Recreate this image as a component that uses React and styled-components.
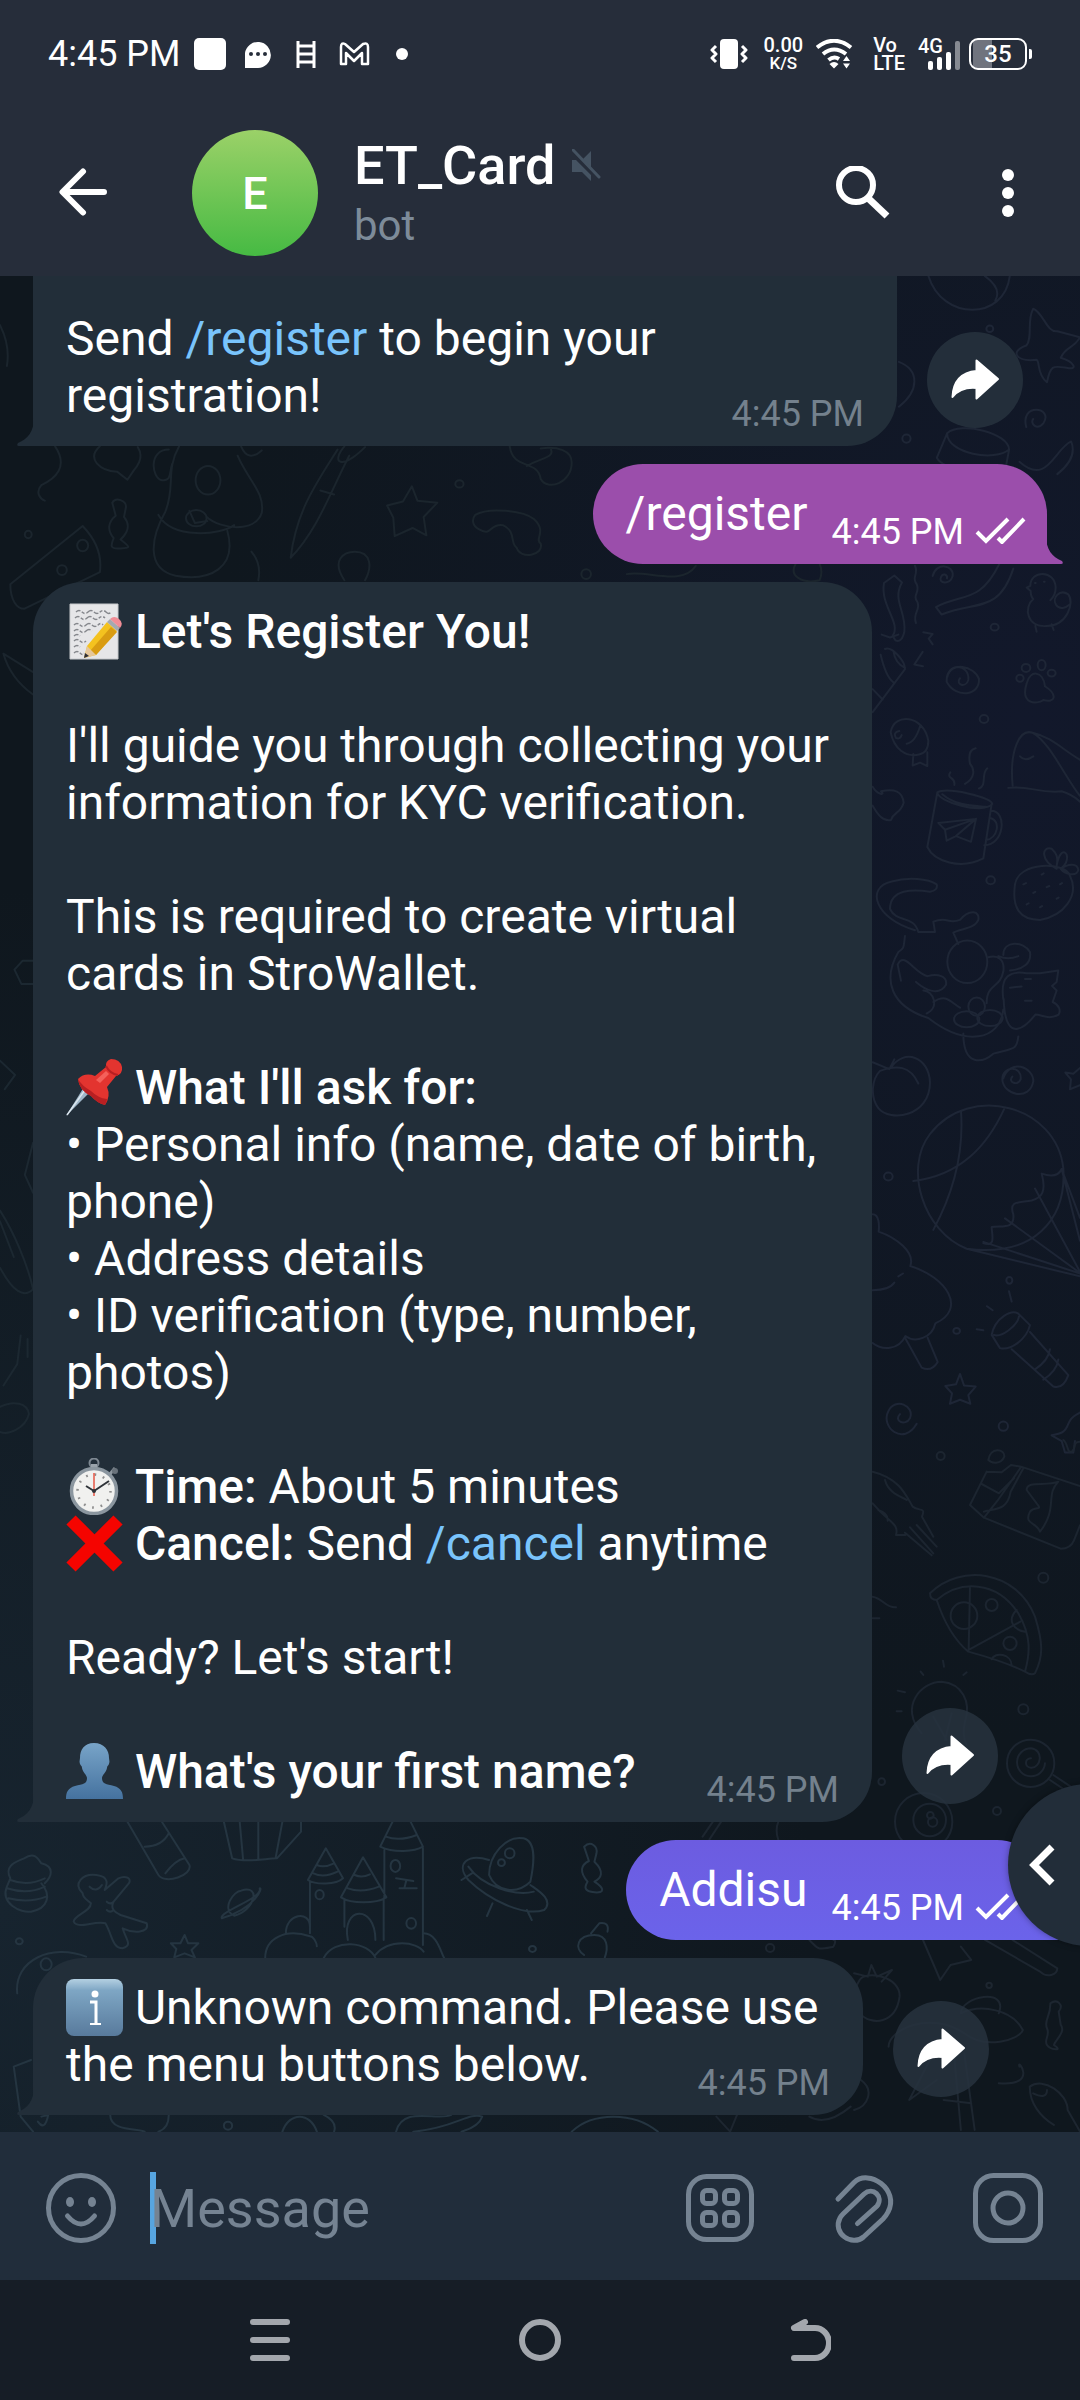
import React from "react";
import styled, { createGlobalStyle, css } from "styled-components";

const Global = createGlobalStyle`
  *, *::before, *::after { box-sizing: border-box; }
  body { margin: 0; background: #161d26; }
  button { border: 0; padding: 0; background: none; color: inherit; font: inherit; cursor: pointer; }
  svg { display: block; flex: none; }
  p { margin: 0; }
`;

const Screen = styled.div`
  min-height: 100vh;
  display: flex;
  flex-direction: column;
  overflow: hidden;
  font-family: Roboto, "Noto Sans", sans-serif;
  color: #fff;
`;

/* ---------- top ---------- */

const Top = styled.header`
  background: #262d3a;
`;

const StatusBar = styled.div`
  height: 108px;
  padding: 0 48px;
  display: flex;
  align-items: center;
  justify-content: space-between;
`;

const StatusGroup = styled.div`
  display: flex;
  align-items: center;
  gap: ${(p) => p.$gap}px;
`;

const Clock = styled.span`
  font-size: 36px;
  line-height: 42px;
`;

const Stack = styled.span`
  display: flex;
  flex-direction: column;
  align-items: ${(p) => p.$align || "center"};
  font-size: 20px;
  font-weight: 500;
  line-height: 18px;
`;

const StackSmall = styled.span`
  font-size: 17px;
`;

const Signal = styled.span`
  display: grid;
  width: 42px;
  height: 34px;
  font-size: 20px;
  font-weight: 500;
  line-height: 18px;
  > * { grid-area: 1 / 1; }
`;

const BatteryWrap = styled.span`
  display: flex;
  align-items: center;
`;

const Battery = styled.span`
  width: 58px;
  height: 32px;
  border: 2px solid #fff;
  border-radius: 9px;
  font-size: 24px;
  font-weight: 500;
  line-height: 28px;
  text-align: center;
  background: linear-gradient(to right, transparent 2px, #70747e 2px, #70747e 21px, transparent 21px);
`;

const BatteryTip = styled.span`
  width: 3px;
  height: 10px;
  margin-left: 2px;
  border-radius: 0 2px 2px 0;
  background: #fff;
`;

const ChatHeader = styled.div`
  height: 168px;
  padding: 2px 66px 0 58px;
  display: flex;
  align-items: center;
`;

const Avatar = styled.div`
  width: 126px;
  height: 126px;
  margin: 0 36px 0 84px;
  border-radius: 50%;
  flex: none;
  display: grid;
  place-items: center;
  background: linear-gradient(#9bd168, #46ba43);
  font-size: 45px;
  font-weight: 500;
`;

const Titles = styled.div`
  flex: 1;
  min-width: 0;
  display: flex;
  flex-direction: column;
  gap: 5px;
`;

const TitleRow = styled.div`
  display: flex;
  align-items: center;
  gap: 16px;
`;

const Title = styled.h1`
  margin: 0;
  font-size: 54px;
  font-weight: 500;
  line-height: 60px;
`;

const Subtitle = styled.span`
  font-size: 42px;
  line-height: 50px;
  color: #7d8b99;
`;

const HeaderActions = styled.div`
  display: flex;
  align-items: center;
  gap: 112px;
`;

/* ---------- conversation ---------- */

const Chat = styled.main`
  flex: 1;
  position: relative;
  overflow: hidden;
  padding-bottom: 17px;
  display: flex;
  flex-direction: column;
  gap: 18px;
  background:
    radial-gradient(ellipse 75% 55% at 95% 24%, #12182b, transparent),
    radial-gradient(ellipse 75% 55% at 0% 88%, #17242f, transparent),
    #0f171e;
`;

const Wallpaper = styled.svg`
  position: absolute;
  inset: 0;
  width: 100%;
  height: 100%;
  fill: none;
  stroke: #1e2636;
  stroke-width: 2;
  stroke-linecap: round;
  stroke-linejoin: round;
  path, circle, ellipse { vector-effect: non-scaling-stroke; }
`;

const Row = styled.div`
  position: relative;
  display: flex;
  align-items: flex-end;
  gap: 30px;
  padding: 0 33px;
  justify-content: ${(p) => (p.$out ? "flex-end" : "flex-start")};
`;

const tailIn = css`
  border-radius: 50px 50px 50px 0;
  background: #222e39;
`;

const tailOut = css`
  border-radius: 50px 50px 0 50px;
  background: ${(p) => p.$tone};
`;

const Bubble = styled.article`
  position: relative;
  width: ${(p) => (p.$width ? p.$width + "px" : "auto")};
  padding: 21px 33px 22px;
  display: grid;
  font-size: 48px;
  line-height: 57px;
  ${(p) => (p.$out ? tailOut : tailIn)}
  ${(p) => p.$out && css`
    padding-right: 21px;
    grid-auto-flow: column;
    gap: 24px;
  `}
  ${(p) => p.$cut && css`
    padding-top: 34px;
    border-top-left-radius: 0;
    border-top-right-radius: 0;
  `}
`;

const Tail = styled.svg`
  position: absolute;
  bottom: 0;
  ${(p) => (p.$out ? "right: -16px; transform: scaleX(-1);" : "left: -16px;")}
`;

const Body = styled.div`
  grid-row: 1;
  grid-column: 1;
  min-width: 0;
`;

const Line = styled.p`
  min-height: 57px;
  font-weight: ${(p) => (p.$strong ? 500 : 400)};
  b { font-weight: 500; }
`;

const Command = styled.a`
  color: #79c4fc;
  text-decoration: none;
`;

const Stamp = styled.time`
  grid-row: 1;
  grid-column: ${(p) => (p.$out ? 2 : 1)};
  align-self: end;
  justify-self: end;
  margin-bottom: -11px;
  display: flex;
  align-items: baseline;
  gap: 11px;
  font-size: 36px;
  line-height: 42px;
  color: ${(p) => (p.$out ? "#fff" : "#74818d")};
`;

const Emoji = styled.svg`
  display: inline-block;
  vertical-align: top;
  width: 57px;
  height: 57px;
`;

const Forward = styled.button`
  width: 96px;
  height: 96px;
  margin-bottom: 18px;
  border-radius: 50%;
  flex: none;
  background: rgba(39, 50, 62, 0.85);
`;

const SideTab = styled.button`
  position: absolute;
  right: -90px;
  bottom: 186px;
  width: 162px;
  height: 162px;
  padding-left: 21px;
  border-radius: 50%;
  background: #222d39;
  box-shadow: 0 0 6px rgba(0, 0, 0, 0.35);
`;

/* ---------- bottom ---------- */

const Composer = styled.form`
  background: #212d3b;
  color: #758392;
  padding: 40px 36px 36px 45px;
  display: flex;
  align-items: center;
  gap: 72px;
`;

const Field = styled.div`
  flex: 1;
  min-width: 0;
  display: flex;
  align-items: center;
  margin-left: -39px;
`;

const Caret = styled.span`
  width: 6px;
  height: 72px;
  margin-right: -6px;
  background: #57a5e0;
`;

const Input = styled.input`
  flex: 1;
  min-width: 0;
  height: 72px;
  padding: 0;
  border: 0;
  outline: 0;
  background: transparent;
  color: #fff;
  font-family: inherit;
  font-size: 54px;
  &::placeholder { color: #758392; opacity: 1; }
`;

const NavBar = styled.nav`
  height: 120px;
  padding: 0 135px;
  background: #161d26;
  display: grid;
  grid-template-columns: repeat(3, 1fr);
  place-items: center;
`;

/* ---------- drawings ---------- */

const MemoEmoji = () => (
  <Emoji viewBox="0 0 57 57" role="img" aria-label="memo">
    <path d="M4 1h48v55H4z" fill="#e6e6e8" stroke="#c7c9cc" />
    <g stroke="#85878c" strokeWidth="1.4" fill="none" strokeDasharray="5 1.5 3 2 7 1.5">
      <path d="M10 9q3-3 6 0t6 0 6 0 6 0 6 0 5 0M9 15q3-3 6 0t6 0 6 0 6 0 6 0M8 22q3-3 6 0t6 0 6 0 6 0 5 0M8 28q3-3 6 0t6 0 6 0M8 33q3-3 6 0M8 38q3-3 6 0t6 0M8 44q3-3 6 0M8 50q3-3 6 0t4 0" />
    </g>
    <path d="M18 55l3-12 20-24 10 9-21 24z" fill="#f4c21f" />
    <path d="M24 48l21-24 6 5-21 23z" fill="#d99c12" />
    <path d="M18 55l3-12 9 9z" fill="#e6c79a" />
    <path d="M18 55l1-5 4 3z" fill="#2e2e33" />
    <path d="M41 19l3-3 10 9-3 3z" fill="#a4a9af" />
    <path d="M44 16q4-4 9 0t1 9z" fill="#f08d96" />
  </Emoji>
);

const PinEmoji = () => (
  <Emoji viewBox="0 0 57 57" role="img" aria-label="pushpin">
    <path d="M0 57L18 28l6 5z" fill="#9fb6c8" />
    <path d="M1 56L19 31" stroke="#dbe6ee" strokeWidth="1.5" />
    <path d="M12 20q7-7 17-3l11-9q-1-6 5-8 9 0 11 8 1 7-6 9l-9 11q4 9-2 18-8-2-14-9-12-6-13-17z" fill="#e3342f" />
    <path d="M12 20q1 11 13 17 6 7 14 9 2-3 2-6-9-1-16-8-9-5-13-12z" fill="#b81f22" />
    <path d="M40 7q4 8 12 9" stroke="#b81f22" strokeWidth="2" fill="none" />
    <path d="M30 21l10-9 3 3-9 9z" fill="#f4605a" />
  </Emoji>
);

const StopwatchEmoji = () => (
  <Emoji viewBox="0 0 57 57" role="img" aria-label="stopwatch">
    <circle cx="28" cy="5" r="4.5" fill="none" stroke="#7d8791" strokeWidth="2" />
    <path d="M25 6h6v7h-6z" fill="#9aa3ab" />
    <path d="M44 16l5-6" stroke="#8d969e" strokeWidth="3" />
    <circle cx="49" cy="13" r="3" fill="#69727b" />
    <circle cx="28" cy="33" r="22.5" fill="#f1f1ef" stroke="#8b969f" strokeWidth="3.5" />
    <circle cx="28" cy="33" r="16.5" fill="none" stroke="#8e8e8e" strokeWidth="2.5" strokeDasharray="1.8 6.84" />
    <path d="M28 33l15-10M28 33l-8-5" stroke="#2f3338" strokeWidth="2" />
    <path d="M28 38V15" stroke="#e8604f" strokeWidth="1.6" />
    <circle cx="28" cy="33" r="2" fill="#2f3338" />
  </Emoji>
);

const CrossEmoji = () => (
  <Emoji viewBox="0 0 57 57" role="img" aria-label="cross mark">
    <path d="M5 5l47 47M52 5L5 52" stroke="#f50400" strokeWidth="13" />
  </Emoji>
);

const PersonEmoji = () => (
  <Emoji viewBox="0 0 57 57" role="img" aria-label="bust in silhouette">
    <defs>
      <linearGradient id="bust" x1="0" y1="0" x2="0" y2="1">
        <stop offset="0" stopColor="#78a4c8" />
        <stop offset="1" stopColor="#45729f" />
      </linearGradient>
    </defs>
    <path d="M28 0c10 0 15 7 15 15 0 2 1 3 0 6-1 2-2 2-2 4-1 5-5 7-5 10 0 6 4 6 12 8 7 2 9 6 9 13H0c0-7 2-11 9-13 8-2 12-2 12-8 0-3-4-5-5-10 0-2-1-2-2-4-1-3 0-4 0-6C14 7 18 0 28 0z" fill="url(#bust)" />
  </Emoji>
);

const InfoEmoji = () => (
  <Emoji viewBox="0 0 57 57" role="img" aria-label="information">
    <defs>
      <linearGradient id="info" x1="0" y1="0" x2="0" y2="1">
        <stop offset="0" stopColor="#b4d0e2" />
        <stop offset="0.2" stopColor="#7ea6c4" />
        <stop offset="1" stopColor="#587a9c" />
      </linearGradient>
    </defs>
    <rect x="0" y="0" width="57" height="57" rx="8" fill="url(#info)" />
    <circle cx="29" cy="15" r="3.5" fill="#fff" />
    <path d="M24 23h6v22" stroke="#fff" strokeWidth="3" fill="none" />
    <path d="M24 45h11" stroke="#fff" strokeWidth="2" />
  </Emoji>
);

const BubbleTail = ({ out, color }) => (
  <Tail $out={out} width="17" height="28" viewBox="0 0 17 28" aria-hidden="true">
    <path d="M17 0C17 13 11 21 1 25Q-1 28 2 28H17z" fill={color} />
  </Tail>
);

const Checks = () => (
  <svg width="51" height="27" viewBox="0 0 51 27" fill="none" stroke="#fff" strokeWidth="4" role="img" aria-label="Read">
    <path d="M2 15l9 9L33 2M23 21l4 4L49 2" />
  </svg>
);

const ForwardButton = () => (
  <Forward type="button" aria-label="Forward message">
    <svg width="96" height="96" viewBox="0 0 96 96" fill="#fff" stroke="#fff" strokeWidth="2" strokeLinejoin="round">
      <path d="M25.500 65C26 50 34 40 49.500 39V28.500L71 47 49.500 66.500V56C38 55 31 58 25.500 65z" />
    </svg>
  </Forward>
);

const Doodles = () => (
  <Wallpaper viewBox="0 276 1080 1856" preserveAspectRatio="xMidYMin slice" aria-hidden="true">
    {/* right edge, upper half */}
    <g transform="translate(860 560) scale(.3333 .574)">
      <path d="M103 27l23 12C95 70 140 90 133 125q-8 20-27 15l-8-8C125 110 60 80 72 40zM165 10c12 15-12 20 5 32 12 15-15 18 3 32 8 15-16 18-5 36M218 28c10-25 65-20 60 0-8 17-45 12-35 2 5-8 20-5 18 2M228 82c80-25 130-5 190-75M245 95c100-25 170 0 215-80M228 82l17 13" />
      <path d="M511 45c0-28 75-28 76 3 0 12-8 18-16 22M511 45l-11 3 12 6q0 10 8 14c-30 14-20 50 40 47 60 0 85-40 65-55-25-10-50 5-37 18 12 10 30 5 40 0M526 115l4 10M575 112l6 10M525 40h2M552 38h2" />
      <path d="M190 126l28 3-12 8 12 10M188 160l-25 22 26 3M65 130l25 5 25-5M262 204c10-28 80-20 95 3 3 30-70 35-97 5-3-35 70-32 65-3-8 15-40 8-25-3" />
      <path d="M500 215c10-25 50-22 55 5 40 15 30 30-5 24-20 8-70 8-50-29zM75 155c20-5 60 20 60 35L38 265M62 165c10 25 20 40 38 48M100 158q5 22 35 30M38 225l30 18" />
      <ellipse cx="480" cy="206" rx="11" ry="6" /><ellipse cx="498" cy="188" rx="13" ry="7" /><ellipse cx="545" cy="183" rx="12" ry="9" /><ellipse cx="575" cy="197" rx="12" ry="6" />
      <path d="M92 300c10-35 100-30 113 15 0 15-10 22-28 24-40 5-75-10-85-39zM160 338l-2 20 22-5 22 6V335M118 298q-20 2-10 12 12 3 17-5M180 290q-15 28-40 30M458 393c-10-60 20-100 60-92 60 8 90 30 145 48M445 397c60-5 90 10 160 6q30 5 55 18M518 301c50 15 100 80 142 110M480 342q15 10 40 0" />
      <path d="M232 405l-30 95c20 25 100 40 168 20l25-95M232 405c30-10 160 8 165 20-30 20-165-5-165-20zM247 408c40 20 90 20 130 22M393 437c50 0 40 60-20 60M393 450c30 5 20 35-15 38M235 458l113-7-15 40-45-10-28 8-5-19zM255 470l93-19-60 30M283 392c5-15-25-10-12-22M315 390c30-10 30-25 15-35-5-15 0-25 17-27M357 398c25-5 5-25 25-35M38 395c15 15 40 15 25 8 40-5 65 0 68 20-10 20-30 15-38 30-25 3-40-10-55-25" />
      <path d="M465 565c10-40 150-40 165-15 30 35-20 70-90 77-60 0-85-20-75-62zM590 538c-50-15-45-40-15-35 15 8 20 15 15 30 5-20 20-30 30-20 5 10-5 20-18 25 20-8 50-12 53 2-5 12-40 8-53-2M490 565l8-2M520 580l6-2M560 570l8-2M500 600l6-2M540 605l6-2M590 590l6-2M600 565l6-2M545 548l6-2" />
      <path d="M165 645c-120-20-150-75-70-85 50-8 110-5 135 5q5 10-20 13c-50-5-120-5-120 30 20 25 70 10 85 40h50l-5-18c45-10 40 5 80-3 30-20 60-15 55 0-10 15-50 15-75 22l15 20M135 655c-5 20 0 20-20 28-50 50-20 95 90 115 110 50 215 40 225-15M310 825c0 60 60 50 90 35 60-10 70-5 75-30M113 705c20-25 50 15 90 20 30-5 60 0 55 15-20 20-60 10-90-5M113 705l10 28M200 790c40-10 20-40-10-40M220 770c40-15 50 0 80 10M430 765c-10-40 20-50 70-45h40l55-5-5 20-14 7 14 8-12 20c20 5 25 15 18 22-30 10-50 0-70 0-20 15-90 60-95-27zM385 692c30-5 50 5 45 25-10 30-50 20-50 55M415 690c20 5 40 5 60 0M430 688c0-25 60-25 80-5 5 20-20 30-60 32M495 768h20M450 745l35-2M495 730h18" />
      <ellipse cx="322" cy="700" rx="60" ry="37" /><ellipse cx="350" cy="778" rx="25" ry="16" /><ellipse cx="320" cy="800" rx="38" ry="14" /><ellipse cx="390" cy="798" rx="38" ry="14" />
      <path d="M92 885c40-35 115-20 118 25 0 60-120 70-155 45-25-20-20-50 5-65 50-10 90-10 115 22M38 875l50 12 15-17M430 903c20-35 90-20 90 5-10 35-90 25-93-3 0-25 60-25 55 0-8 12-40 5-25-5M660 885l-20 10-24-2 17 12-3 17 30-7" />
      <path d="M320 1200C190 1170 130 1060 210 1000c120-90 380-50 400 60 10 90-90 155-290 140zM303 960c10 80-30 150-83 207M160 1082c140-10 220-60 272-125M370 1190c40 8 25-15 25-28 30-3 70 5 65-22-15-25 20-20 55-24 30-5 45-15 30-47 25 5 50 5 60-8l55 85M605 1061l55 125M525 1095l135 145M435 1147l225 95M370 1188l290 55M320 1200l340 48" />
      <path d="M38 1140c20 0 20 20 18 30 50 10 110 35 95 60 110 20 170 75 75 100-10 25-60 35-90 22-20 25-70 25-98 12M38 1272q50 0 65-13M135 1355l50 52q30 8 48-10l-30-42M115 1248l14-5" />
      <path d="M395 1350c10-30 60-45 80-37l35 20c-10 25-60 45-90 40zM402 1350c20 5 70-15 75-32M455 1375l125 65q30 5 45-20L510 1345M525 1410q40-15 45-35M550 1428q40-15 45-35M455 1292l-8-18M398 1307l-17-7M370 1342l-20-2" />
      <path d="M300 1418l12 20 35 2-22 15 6 15-31-7-30 7 6-18-20-13 32-3zM170 1505c-40 40-110 5-85-22 20-25 80-10 65 12-15 15-50 5-30-7M575 1525c30-3 40-5 50-20s25-15 35-20M575 1525l30 10 10 20 25 0 5-20" />
      <ellipse cx="404" cy="117" rx="12" ry="6" /><ellipse cx="372" cy="277" rx="13" ry="7" /><ellipse cx="392" cy="558" rx="13" ry="7" /><ellipse cx="85" cy="1074" rx="13" ry="7" /><ellipse cx="290" cy="1343" rx="10" ry="5" /><ellipse cx="430" cy="1509" rx="14" ry="8" /><ellipse cx="448" cy="1255" rx="9" ry="6" />
    </g>
    {/* right edge, lower half */}
    <g transform="translate(860 1440) scale(.3333)" stroke="#1c2530">
      <path d="M38 95c80 20 100 70 120 105 20 15 40 0 28 30l34 60M170 255l60 65M150 262l70 78M135 278l80 68M38 190c50 60 80 60 70 95h28M75 120c10 40 50 50 65 60M55 210q30 10 28 32" />
      <path d="M380 95l-50 100 42 38 230 93q30 0 40-25l18-45M380 95l45 2 28-22 30 5 177 58M372 233l40-50 70-100M372 215c30-10 70 0 80-60l38-70M365 132l52 28 45-45M500 150c0-30 60-10 95-25-40 40 0 80-55 150-10-30-50-20-30-60 15-20 40 0 20-25zM385 60c5-40 50-35 48-10-10 25-40 20-48 10" />
      <circle cx="242" cy="48" r="12" /><circle cx="550" cy="413" r="15" /><circle cx="490" cy="808" r="15" /><circle cx="411" cy="1113" r="12" /><circle cx="65" cy="1025" r="10" />
      <path d="M210 460c90-90 260-70 315 70 25 80 25 120 0 170q-10 8-30-5-60-30-170-60-60-50-95-155-20 0-20-20zM230 480c70-60 180-60 245 40 40 70 35 120 20 175M330 440l-4 190 155-85M470 510c-30 30-10 60 25 65M395 658c10-25 60-15 60 18" />
      <circle cx="312" cy="527" r="40" /><circle cx="395" cy="495" r="18" /><circle cx="450" cy="610" r="20" />
      <path d="M185 880c-70-80 0-155 60-155 60 5 90 60 70 120q-10 40 5 70M252 680l-3-18M190 705l-8-10M310 705l10-8M135 757l-22-5M125 814h-15M220 830l40 70M275 820l-20 80" />
      <circle cx="512" cy="970" r="71" /><path d="M555 970a42 42 0 1 1-42-45c40 5 30 60 0 58-20 0-20-28 0-28M570 1020l60 40M580 1005l60 40" />
      <circle cx="191" cy="1145" r="86" /><circle cx="209" cy="1140" r="49" /><circle cx="211" cy="1126" r="10" /><circle cx="218" cy="1146" r="14" />
      <path d="M38 470c30 5 40 35 70 32M38 535h20M610 0c15 10 10 40 25 35s0-30 25-30" />
    </g>
    {/* upper left strip */}
    <g transform="translate(0 270) scale(.6888 .4082)" stroke="#1b252d">
      <path d="M80 432c20 50 0 80-20 95-10 20 0 35 5 38M145 432c-20 30 0 60 25 62l15 20 10-25q15-30 5-55M260 432c-20 60-5 100-20 160-20 60-30 140 15 157 50 15 90-20 75-110M245 440c-30 0-25 70-10 75 15 0 10-15 15-40M345 455c15 60 40 90 35 140-10 50-60 40-80 10M230 600c20 60 90 50 110 25M365 690q15 30 10 70M350 432q10 40 30 10M275 590l8 30 18-5" />
      <ellipse cx="302" cy="515" rx="18" ry="35" /><ellipse cx="285" cy="608" rx="15" ry="20" />
      <path d="M490 440c-30 80-60 150-68 265 40-70 60-170 85-250M465 540l20 10M500 432c-20 40-5 60 30 2M598 530l8 35 29 5-20 35 4 45-20-18-26 20-2-45-9-30 23-10zM740 432c5 60 40 30 45 80 10 30 45 10 45-40 0-30-20-40-45-35M765 480c20-20 40-20 35-40" />
      <path d="M690 600c20-20 70-10 85 10 20 30 0 50 10 60 5 30-30 40-35 10-10-10 0-40-20-55-20-5-15 30-35 10-10-10-10-25-5-35zM163 570c5-15 20-5 20 10l-3 25c10 20 5 40-5 55 15 20 15 20 0 22s-15-5-10-25c-10-20-8-40 3-55zM120 627L15 770c0 40 10 60 20 60l110-90q5-60-25-113z" />
      <ellipse cx="120" cy="675" rx="8" ry="14" /><ellipse cx="90" cy="735" rx="7" ry="12" /><ellipse cx="667" cy="524" rx="6" ry="9" /><ellipse cx="851" cy="745" rx="7" ry="12" /><ellipse cx="41" cy="648" rx="5" ry="9" />
      <path d="M500 760c-20-50 0-70 15-70 25 0 25 40 15 70M0 135q15 50 10 100M5 940l43 45M5 940q10 60 43 100M910 745c30-10 80 30 100-20M1155 720c-10 30 10 50 35 40q5-20 0-40" />
    </g>
    {/* beside the first messages */}
    <g transform="translate(0 270) scale(.6888 .4082)">
      <path d="M1348 15c20 110 110 110 118 0M1430 15q25 30 15 60M1500 95c15 10 20 60 35 55l33 15c-10 30-20 20-28 50 20 10 25 30 10 25-20-5-25-10-30 35-15-20-10-50-15-55-30 5-40-20-15-35 10-20 0-60 10-90zM1305 225c30 20 30 70 0 110M1490 385c-10-60 40-50 25-10-10 20-20 0-15-10M1375 400c20-30 90 0 90 40-20 30-90 10-90-40zM1375 400l-15 60c10 30 60 40 100 25l5-45M1480 470c40 60 50-30 75-50q10 40-20 80" />
      <ellipse cx="1316" cy="413" rx="6" ry="10" /><ellipse cx="1437" cy="144" rx="5" ry="8" />
    </g>
    {/* left edge */}
    <g transform="translate(0 900) scale(.6888 .357)" stroke="#1c2831">
      <path d="M48 170l-15 0-12 25 10 40 17 0M0 450l22 40-15 40M48 680l-12 90 12 50M0 870c20 60 40 150 48 220q-20 40-48-60M0 900l20 100M30 1220l-5 80-20 60M40 1230v50M0 1420c20-20 40-10 42 20-5 40-30 60-42 50" />
    </g>
    {/* lower left */}
    <g transform="translate(0 1800) scale(.6888 .3333)" stroke="#253541">
      <path d="M10 260c-10 50 20 80 35 75 25-10 30-50 15-85M10 260l5-25c-10-40 10-50 20-60 15-20 20 0 25 15 20 10 15 40 5 60M15 240q25 20 50-5M10 265q30 20 55-5M12 295q30 15 55-5" />
      <path d="M120 280c-15-30 0-60 20-55 20 5 15 30 12 45l20-35c10-10 20 0 15 15l-22 55c-5 20 0 30 10 40l38 25c5 30-20 30-35 15 5 35 15 50 0 60-15 0-15-40-25-75-15-10-40 20-46-5 0-20 25-30 25-55-5-10-12-15-12-30zM130 260q10 20 18-5M155 305q5 10 10 0M155 330q5 10 10 0" />
      <path d="M185 65l45 160c10 30 50 0 45-30L235 65M210 140q25 0 35-40M240 220q15-40 28-45M325 65l12 110c20 15 50 0 65 0l35-80V65M348 65l5 115M375 65v115M410 65l-10 110" />
      <path d="M350 272c30-20 20 60-10 75-20-20 0-75 10-75zM322 355c-5-20 60-60 55-90 5-5-5 60-55 90zM268 405l5 25 15 0-10 20 5 22-15-12-15 12 3-25-8-17h14z" />
      <path d="M447 240l26-95 25 90c-10 20-40 20-51 5zM455 220q15 15 35-5M460 195q10 10 25-5M450 245v155M527 172l-32 120c15 20 50 20 66 0zM505 265q20 15 45-5M515 225q10 10 22-2M500 300v80M557 295v125M570 65l-18 75c20 20 50 15 62 0l-18-75M560 110q20 15 45-5M558 150v145M614 145v290M505 420c-10-100 40-110 40 0M575 235l25 8M590 240l-3 25M580 265l25 0" />
      <ellipse cx="574" cy="198" rx="7" ry="18" /><ellipse cx="597" cy="370" rx="7" ry="16" /><ellipse cx="464" cy="284" rx="6" ry="14" />
      <path d="M385 474c0-60 30-90 65-65 5 0 10 20 10 30M415 400c0-60 35-70 35-20M470 474c15-60 65-50 75 0M545 465c20-50 60-40 70-10M615 400c20 0 25 60 30 74" />
      <path d="M710 225c0-60 25-120 50-110 20 10 15 80 10 130-20 40-50 30-60-20zM710 180c-30-20-50 10-30 60 30 60 80 110 110 90 15-30-10-60-20-75M680 200c20 60 70 90 95 75M715 310l-8 38M765 330l7 30M670 240l15-20" />
      <ellipse cx="740" cy="160" rx="7" ry="15" /><ellipse cx="728" cy="188" rx="5" ry="10" />
      <path d="M848 140c10-20 20 0 18 20l-3 25c15 30 10 50 0 60 15 20 15 35 0 32s-15-15-10-32c-12-30-10-50 2-62zM848 465c-15-20-10-60 15-60 20 0 20 40 15 68M858 400l12-30q15-5 12 25" />
      <path d="M25 580c-5-100 50-150 100-110M20 800l25-20M20 800l10 150 18 45M60 950l10-5q-5 50-15 20M160 945c0 50 40 40 50 50M245 945q0 40-15 50M410 995c10-60 40-60 50 0M470 945q20 20 15 50M575 995c10-80 60-30 80-50M600 995c60-10 80-60 100-45q-5 30-30 45M830 995c30-60 90-60 125 0" />
      <ellipse cx="67" cy="493" rx="8" ry="18" /><ellipse cx="331" cy="977" rx="6" ry="12" /><ellipse cx="28" cy="424" rx="5" ry="9" /><ellipse cx="773" cy="447" rx="5" ry="9" />
    </g>
    {/* lower right */}
    <g transform="translate(0 1800) scale(.6888 .3333)" stroke="#1d2630">
      <path d="M1020 110l15-45M1030 118l17-53M1130 65q-5 25 0 55M1175 420c15 30 10 30 35 20q5-20 0-20M1340 420l25 120 15-45 30-15-15-40M1430 420l80 95c10 20 25 10 25-10L1470 420M1240 520l20 10 5-35 8 35 22-20-15 35M1248 540c10-30 60-10 58 50-5 80-40 90-58 50q-15-50 0-100M1290 740c0-50 60-110 110-40 30 50 80 20 85-10-15-60-60-80-90-50 0-50 70-80 55 0M1385 760l10 230M1400 760l15 230M1370 900l40 10M1350 780l-30 120 40-60M1480 800c-5-30 30 60-30 50" />
      <path d="M1525 610c10-15 20 5 12 25l3 40c8 20-8 45-10 60 15 20-5 15-10 0s5-30 0-50c-5-25 5-30 5-75zM1495 860c20-30 55 20 55 70l18 65M1495 860c0 50 15 90 35 115M1500 880q20 20 20-10M1250 840c20 30 10 80-10 90M1175 950q25 30 60-30M1040 950l20 45 10-50" />
      <ellipse cx="1118" cy="444" rx="6" ry="12" /><ellipse cx="1436" cy="556" rx="4" ry="8" />
    </g>
  </Wallpaper>
);

const IncomingMessage = ({ width, cut, children }) => (
  <Row>
    <Bubble $width={width} $cut={cut}>
      <Body>{children}</Body>
      <Stamp>4:45 PM</Stamp>
      <BubbleTail color="#222e39" />
    </Bubble>
    <ForwardButton />
  </Row>
);

const OutgoingMessage = ({ tone, tail, children }) => (
  <Row $out>
    <Bubble $out $tone={tone}>
      <Body>{children}</Body>
      <Stamp $out>4:45 PM<Checks /></Stamp>
      <BubbleTail out color={tail} />
    </Bubble>
  </Row>
);

export default function App() {
  return (
    <Screen>
      <Global />
      <Top>
        <StatusBar>
          <StatusGroup $gap={13}>
            <Clock>4:45 PM</Clock>
            <svg width="214" height="32" viewBox="0 0 214 32" fill="#fff">
              <rect width="32" height="32" rx="5" />
              <path d="M51 30V15a13 13 0 1 1 13 15z" />
              <g fill="#262d3a"><circle cx="57" cy="16" r="2" /><circle cx="64" cy="16" r="2" /><circle cx="71" cy="16" r="2" /></g>
              <path d="M104 3v27M120 3v27M104 8h16M104 16h16M104 24h16" stroke="#fff" strokeWidth="3" />
              <path d="M147 26V9q0-5 4-3l9 8 9-8q5-2 5 3v17h-6V15l-8 8-8-8v11z" fill="none" stroke="#fff" strokeWidth="2.500" strokeLinejoin="round" />
              <circle cx="208" cy="16" r="6" />
            </svg>
          </StatusGroup>
          <StatusGroup $gap={13}>
            <svg width="40" height="30" viewBox="0 0 40 30" fill="none" stroke="#fff" strokeWidth="3" strokeLinejoin="round">
              <rect x="10" y="0" width="18" height="30" rx="4" fill="#fff" stroke="none" />
              <path d="M6 7l-4 4 4 4-4 4 4 4M32 7l4 4-4 4 4 4-4 4" />
            </svg>
            <Stack><span>0.00</span><StackSmall>K/S</StackSmall></Stack>
            <svg width="44" height="30" viewBox="0 0 44 30" fill="none" stroke="#fff" strokeWidth="4">
              <path d="M1 8.500Q18-5 35 8.500M7 15Q18 6 30 15M12.500 21Q18 16.500 23 20" />
              <path d="M13.500 25Q18 21 22.500 25L18 29.500zM27 22l3.500-5 3.500 5zM27 24.500l3.500 5 3.500-5z" fill="#fff" stroke="none" />
            </svg>
            <Stack $align="flex-start"><span>Vo</span><span>LTE</span></Stack>
            <StatusGroup $gap={9}>
              <Signal>
                <svg width="42" height="34" viewBox="0 0 42 34" fill="#fff">
                  <rect x="10" y="24" width="5" height="9" rx="2" />
                  <rect x="19" y="20" width="5" height="13" rx="2" />
                  <rect x="28" y="15" width="5" height="18" rx="2" />
                  <rect x="37" y="4" width="5" height="29" rx="2" fill="#868a92" />
                </svg>
                <span>4G</span>
              </Signal>
              <BatteryWrap><Battery>35</Battery><BatteryTip /></BatteryWrap>
            </StatusGroup>
          </StatusGroup>
        </StatusBar>
        <ChatHeader>
          <button type="button" aria-label="Back">
            <svg width="50" height="50" viewBox="0 0 50 50" fill="none" stroke="#fff" strokeWidth="6" strokeLinecap="round" strokeLinejoin="round">
              <path d="M46 24H5M25 3.500L4.500 24 25 44.500" />
            </svg>
          </button>
          <Avatar>E</Avatar>
          <Titles>
            <TitleRow>
              <Title>ET_Card</Title>
              <svg width="29" height="33" viewBox="0 0 29 33" fill="#455362" role="img" aria-label="Muted">
                <path d="M10 11l9-9v19zM0 11h4l15 15v6l-9-9H0z" />
                <path d="M1 1l26 27" stroke="#455362" strokeWidth="3" strokeLinecap="round" />
              </svg>
            </TitleRow>
            <Subtitle>bot</Subtitle>
          </Titles>
          <HeaderActions>
            <button type="button" aria-label="Search">
              <svg width="54" height="54" viewBox="0 0 54 54" fill="none" stroke="#fff">
                <circle cx="20" cy="19" r="17" strokeWidth="6" />
                <path d="M33 33l18 17" strokeWidth="7" />
              </svg>
            </button>
            <button type="button" aria-label="More options">
              <svg width="12" height="48" viewBox="0 0 12 48" fill="#fff">
                <circle cx="6" cy="6" r="6" /><circle cx="6" cy="24" r="6" /><circle cx="6" cy="42" r="6" />
              </svg>
            </button>
          </HeaderActions>
        </ChatHeader>
      </Top>

      <Chat>
        <Doodles />
        <IncomingMessage width={864} cut>
          <Line>Send <Command href="#register">/register</Command> to begin your registration!</Line>
        </IncomingMessage>
        <OutgoingMessage tone="#9b4eab" tail="#9b4eab">
          <Line>/register</Line>
        </OutgoingMessage>
        <IncomingMessage width={839}>
          <Line $strong><MemoEmoji /> Let's Register You!</Line>
          <Line />
          <Line>I'll guide you through collecting your information for KYC verification.</Line>
          <Line />
          <Line>This is required to create virtual cards in StroWallet.</Line>
          <Line />
          <Line $strong><PinEmoji /> What I'll ask for:</Line>
          <Line>• Personal info (name, date of birth, phone)</Line>
          <Line>• Address details</Line>
          <Line>• ID verification (type, number, photos)</Line>
          <Line />
          <Line><StopwatchEmoji /> <b>Time:</b> About 5 minutes</Line>
          <Line><CrossEmoji /> <b>Cancel:</b> Send <Command href="#cancel">/cancel</Command> anytime</Line>
          <Line />
          <Line>Ready? Let's start!</Line>
          <Line />
          <Line $strong><PersonEmoji /> What's your first name?</Line>
        </IncomingMessage>
        <OutgoingMessage tone="linear-gradient(#6c5ce0, #6b63ea)" tail="#6b63ea">
          <Line>Addisu</Line>
        </OutgoingMessage>
        <IncomingMessage width={830}>
          <Line><InfoEmoji /> Unknown command. Please use the menu buttons below.</Line>
        </IncomingMessage>
        <SideTab type="button" aria-label="Open side panel">
          <svg width="27" height="42" viewBox="0 0 27 42" fill="none" stroke="#fff" strokeWidth="7">
            <path d="M23 3L5 21l18 18" />
          </svg>
        </SideTab>
      </Chat>

      <Composer onSubmit={(e) => e.preventDefault()}>
        <button type="button" aria-label="Emoji">
          <svg width="72" height="72" viewBox="0 0 72 72" fill="none" stroke="currentColor" strokeWidth="5" strokeLinecap="round">
            <circle cx="36" cy="36" r="32.500" />
            <path d="M22.500 44Q36 60 49.500 44" />
            <ellipse cx="25" cy="30" rx="4" ry="5" fill="currentColor" stroke="none" />
            <ellipse cx="47" cy="30" rx="4" ry="5" fill="currentColor" stroke="none" />
          </svg>
        </button>
        <Field>
          <Caret />
          <Input type="text" placeholder="Message" aria-label="Message" />
        </Field>
        <button type="button" aria-label="Bot keyboard">
          <svg width="72" height="72" viewBox="0 0 72 72" fill="none" stroke="currentColor" strokeWidth="5">
            <rect x="4.500" y="4.500" width="63" height="63" rx="18" />
            <g><rect x="18.500" y="18.500" width="13" height="13" rx="4" /><rect x="40.500" y="18.500" width="13" height="13" rx="4" /><rect x="18.500" y="40.500" width="13" height="13" rx="4" /><rect x="40.500" y="40.500" width="13" height="13" rx="4" /></g>
          </svg>
        </button>
        <button type="button" aria-label="Attach">
          <svg width="72" height="72" viewBox="0 0 72 72" fill="none" stroke="currentColor" strokeWidth="5" strokeLinecap="round">
            <path d="M10 27L26 10.500C41-4 72 18 60 40Q58 44 55 47L35.500 65C24 75 4 61 12 46Q13 44 15 42L36 22C45 14 56 25 49 34L29.500 51.500" />
          </svg>
        </button>
        <button type="button" aria-label="Camera">
          <svg width="72" height="72" viewBox="0 0 72 72" fill="none" stroke="currentColor" strokeWidth="5">
            <rect x="3.500" y="3.500" width="65" height="65" rx="18" />
            <circle cx="36" cy="36" r="15" />
          </svg>
        </button>
      </Composer>

      <NavBar aria-label="System navigation">
        <button type="button" aria-label="Recent apps">
          <svg width="42" height="42" viewBox="0 0 42 42" stroke="#a3a7ad" strokeWidth="6" strokeLinecap="round">
            <path d="M4 3h34M4 21h34M4 39h34" />
          </svg>
        </button>
        <button type="button" aria-label="Home">
          <svg width="42" height="42" viewBox="0 0 42 42" fill="none" stroke="#a3a7ad" strokeWidth="6">
            <circle cx="21" cy="21" r="18" />
          </svg>
        </button>
        <button type="button" aria-label="Go back">
          <svg width="42" height="42" viewBox="0 0 42 42" fill="none" stroke="#a3a7ad" strokeWidth="6" strokeLinecap="round" strokeLinejoin="round">
            <path d="M16 3L5 9H26a14 15 0 0 1 0 30H5" />
          </svg>
        </button>
      </NavBar>
    </Screen>
  );
}
